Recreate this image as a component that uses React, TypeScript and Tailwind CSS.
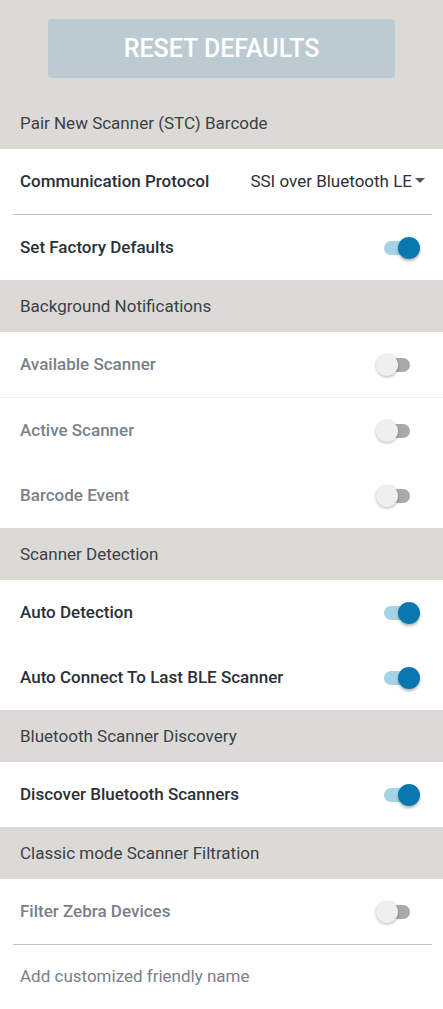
import React from 'react';

type Row =
  | { kind: 'header'; label: string }
  | { kind: 'toggle'; label: string; on: boolean; enabled: boolean; divider?: 'line' | 'faint' }
  | { kind: 'select'; label: string; value: string }
  | { kind: 'text'; label: string };

const rows: Row[] = [
  { kind: 'header', label: 'Pair New Scanner (STC) Barcode' },
  { kind: 'select', label: 'Communication Protocol', value: 'SSI over Bluetooth LE' },
  { kind: 'toggle', label: 'Set Factory Defaults', on: true, enabled: true },
  { kind: 'header', label: 'Background Notifications' },
  { kind: 'toggle', label: 'Available Scanner', on: false, enabled: false, divider: 'faint' },
  { kind: 'toggle', label: 'Active Scanner', on: false, enabled: false },
  { kind: 'toggle', label: 'Barcode Event', on: false, enabled: false },
  { kind: 'header', label: 'Scanner Detection' },
  { kind: 'toggle', label: 'Auto Detection', on: true, enabled: true },
  { kind: 'toggle', label: 'Auto Connect To Last BLE Scanner', on: true, enabled: true },
  { kind: 'header', label: 'Bluetooth Scanner Discovery' },
  { kind: 'toggle', label: 'Discover Bluetooth Scanners', on: true, enabled: true },
  { kind: 'header', label: 'Classic mode Scanner Filtration' },
  { kind: 'toggle', label: 'Filter Zebra Devices', on: false, enabled: false, divider: 'line' },
  { kind: 'text', label: 'Add customized friendly name' },
];

const Switch = ({ on }: { on: boolean }) => (
  <div className="relative w-[44px] h-[22px] mr-[11px]">
    <div
      className={
        on
          ? 'absolute left-[8px] top-[4px] w-[30px] h-[14px] rounded-full bg-[#a6d2e6]'
          : 'absolute left-[4px] top-[4px] w-[30px] h-[14px] rounded-full bg-[#a9a9a9]'
      }
    />
    <div
      className={
        on
          ? 'absolute right-0 top-0 w-[22px] h-[22px] rounded-full bg-[#0a78b0] shadow-[0_2px_3px_rgba(0,0,0,0.3)]'
          : 'absolute left-0 top-0 w-[22px] h-[22px] rounded-full bg-[#efefef] shadow-[0_1px_3px_rgba(0,0,0,0.3)]'
      }
    />
  </div>
);

export default function App() {
  return (
    <div className="w-[443px] min-h-[1009px] bg-white font-['Roboto',sans-serif] text-[17px]">
      {/* Reset button */}
      <div className="bg-[#dcdad7] pt-[19px] pb-[19px] flex justify-center">
        <button className="w-[347px] h-[59px] rounded-[4px] bg-[#bccbd2] text-white text-[25px] font-medium">
          RESET DEFAULTS
        </button>
      </div>

      {rows.map((row, i) => {
        if (row.kind === 'header') {
          return (
            <div
              key={i}
              className="bg-[#dcdad7] h-[52px] pt-[2px] px-[20px] flex items-center text-[#3b4047]"
            >
              {row.label}
            </div>
          );
        }
        if (row.kind === 'select') {
          return (
            <div key={i}>
              <div className="h-[65px] px-[20px] flex items-center justify-between font-medium text-[#2b3038]">
                <span>{row.label}</span>
                <span className="flex items-center font-normal mr-[-2px]">
                  {row.value}
                  <svg width="10" height="6" viewBox="0 0 10 6" className="ml-[3px] mb-[2px]">
                    <path d="M0 0h10L5 5z" fill="#555" />
                  </svg>
                </span>
              </div>
              <div className="h-px bg-[#c4c4c4] ml-[13px] mr-[11px]" />
            </div>
          );
        }
        if (row.kind === 'text') {
          return (
            <div key={i}>
              <div className="h-[64px] px-[20px] flex items-center text-[#7a8088]">{row.label}</div>
              <div className="h-px bg-[#d4d4d4] ml-[13px] mr-[11px]" />
            </div>
          );
        }
        return (
          <div key={i}>
            <div
              className={
                'h-[65px] pl-[20px] pr-[12px] flex items-center justify-between font-medium ' +
                (row.enabled ? 'text-[#2b3038]' : 'text-[#7a8088]')
              }
            >
              <span>{row.label}</span>
              <Switch on={row.on} />
            </div>
            {row.divider === 'line' && <div className="h-px bg-[#c4c4c4] ml-[13px] mr-[11px]" />}
            {row.divider === 'faint' && <div className="h-px bg-[#f0f0f0]" />}
          </div>
        );
      })}
    </div>
  );
}
